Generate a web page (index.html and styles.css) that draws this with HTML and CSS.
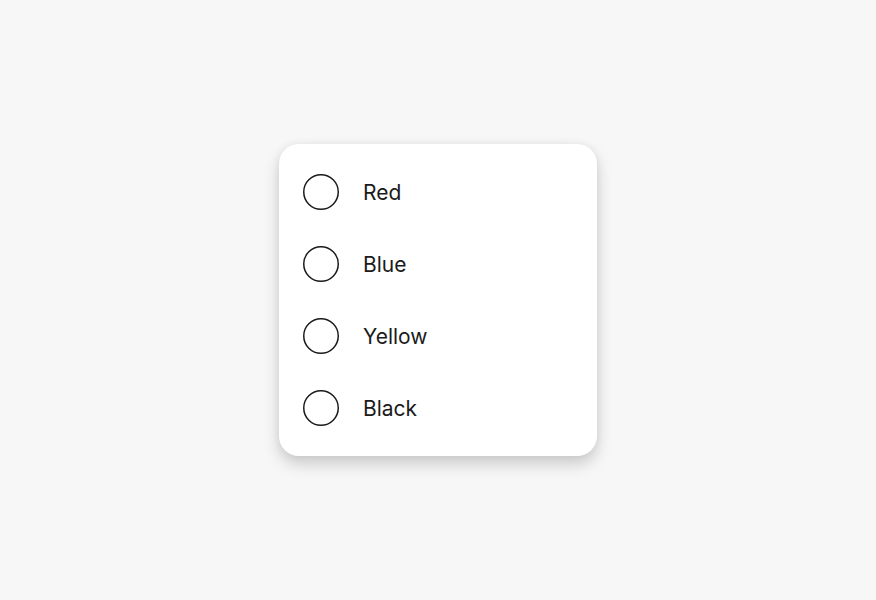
FILE: index.html
```html
<!DOCTYPE html>
<html lang="en">
<head>
    <meta charset="UTF-8">
    <meta name="viewport" content="width=device-width, initial-scale=1.0">
    <title>Color Options</title>
    <link rel="stylesheet" href="styles.css">
</head>
<body>

    <div class="radio-card">
        <label class="radio-row">
            <input type="radio" name="color" value="red">
            <svg class="radio-circle" viewBox="0 0 36 36"><circle cx="18" cy="18" r="17.25"/></svg>
            <span class="radio-label">Red</span>
        </label>
        <label class="radio-row">
            <input type="radio" name="color" value="blue">
            <svg class="radio-circle" viewBox="0 0 36 36"><circle cx="18" cy="18" r="17.25"/></svg>
            <span class="radio-label">Blue</span>
        </label>
        <label class="radio-row">
            <input type="radio" name="color" value="yellow">
            <svg class="radio-circle" viewBox="0 0 36 36"><circle cx="18" cy="18" r="17.25"/></svg>
            <span class="radio-label">Yellow</span>
        </label>
        <label class="radio-row">
            <input type="radio" name="color" value="black">
            <svg class="radio-circle" viewBox="0 0 36 36"><circle cx="18" cy="18" r="17.25"/></svg>
            <span class="radio-label">Black</span>
        </label>
    </div>

</body>
</html>
```

FILE: styles.css
```css
body {
    font-family: Inter, "Noto Sans", sans-serif;
    margin: 0;
    padding: 0;
    background-color: #f7f7f7;
    min-height: 100vh;
    display: flex;
    align-items: center;
    justify-content: center;
}
.radio-card {
    width: 318px;
    box-sizing: border-box;
    padding: 12px 0;
    background-color: white;
    border-radius: 20px;
    box-shadow: 0 8px 16px rgba(0, 0, 0, 0.18), 0 0 8px rgba(0, 0, 0, 0.05);
}
.radio-row {
    display: flex;
    align-items: center;
    height: 72px;
    padding-left: 24px;
    cursor: pointer;
}
.radio-row input {
    display: none;
}
.radio-circle {
    width: 36px;
    height: 36px;
    margin-right: 24px;
    flex-shrink: 0;
}
.radio-circle circle {
    fill: none;
    stroke: #1b1b1b;
    stroke-width: 1.5;
}
.radio-row input:checked + .radio-circle circle {
    fill: #1b1b1b;
}
.radio-label {
    font-size: 21px;
    color: #1b1b1b;
}
```
